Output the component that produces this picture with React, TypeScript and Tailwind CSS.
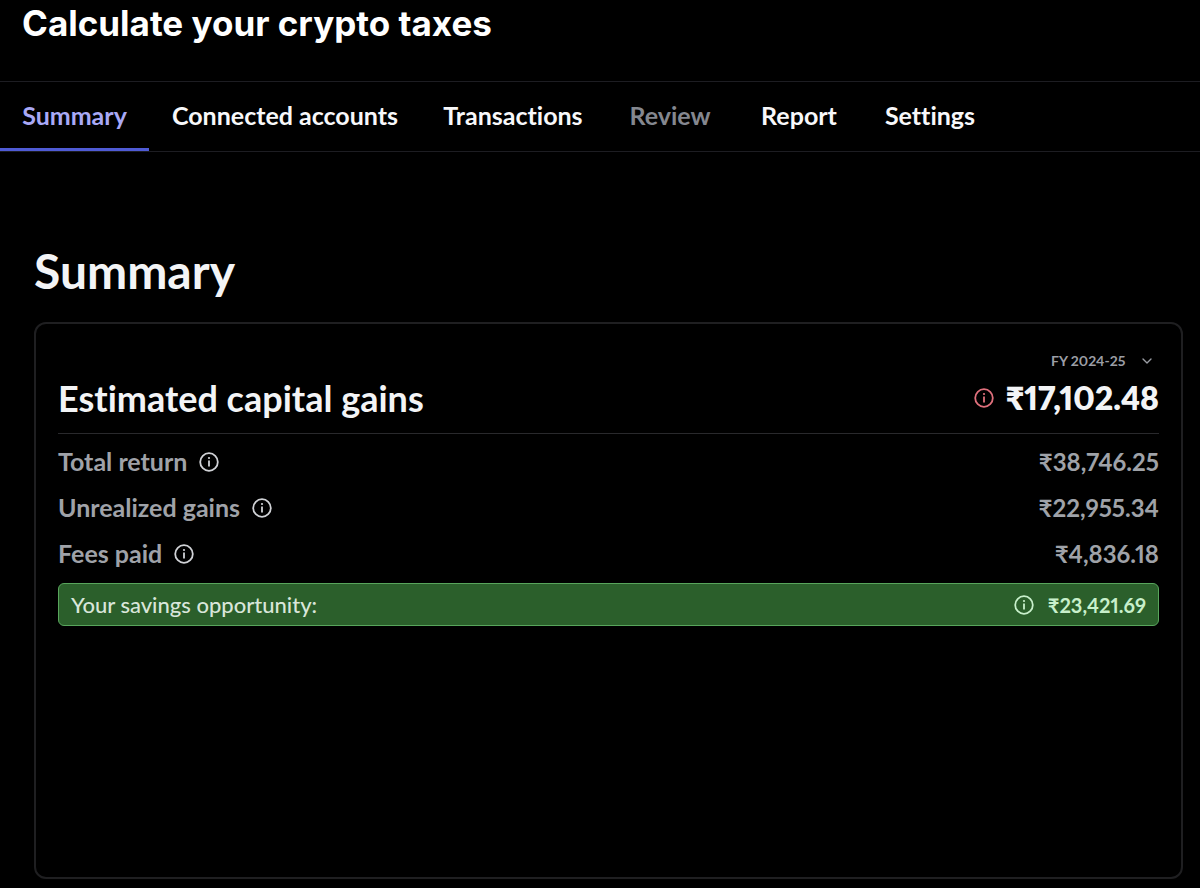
import { ChevronDown } from "lucide-react";

const TABS = [
  { label: "Summary", style: "min-w-[149px] text-[#a9a9f6]", active: true },
  { label: "Connected accounts", style: "min-w-[272px] text-[#f8f8fa]" },
  { label: "Transactions", style: "min-w-[184px] text-[#f8f8fa]" },
  { label: "Review", style: "min-w-[130px] text-[#84878f]", disabled: true },
  { label: "Report", style: "min-w-[128px] text-[#f8f8fa]" },
  { label: "Settings", style: "min-w-[134px] text-[#f8f8fa]" },
];

const ROWS = [
  { label: "Total return", value: "₹38,746.25" },
  { label: "Unrealized gains", value: "₹22,955.34" },
  { label: "Fees paid", value: "₹4,836.18" },
];

function InfoIcon() {
  return (
    <svg viewBox="0 0 20 20" className="size-5" fill="none" aria-hidden="true">
      <circle cx="10" cy="10" r="8.8" stroke="currentColor" strokeWidth="1.8" />
      <circle cx="10" cy="6" r="1.1" fill="currentColor" />
      <path d="M10 8.4v6.1" stroke="currentColor" strokeWidth="1.8" />
    </svg>
  );
}

function InfoButton({ label, className }: { label: string; className: string }) {
  return (
    <button type="button" aria-label={label} className={className}>
      <InfoIcon />
    </button>
  );
}

export default function App() {
  return (
    <div className="min-h-screen bg-black font-['Lato','Noto_Sans',sans-serif] font-bold text-[#f3f4f6] proportional-nums [font-variant-ligatures:none]">
      <header className="px-[22px] pt-[5px] pb-10">
        <h1 className="font-['Inter',sans-serif] text-[35px] leading-9 font-bold text-white">
          Calculate your crypto taxes
        </h1>
      </header>

      <nav className="flex border-y border-[#1d1d22]">
        {TABS.map((tab) => (
          <button
            key={tab.label}
            type="button"
            disabled={tab.disabled}
            aria-current={tab.active ? "page" : undefined}
            className={`h-[69px] border-b-[3px] pt-[2px] text-[25px] ${
              tab.active ? "border-[#4f5bd5]" : "border-transparent"
            } ${tab.style}`}
          >
            {tab.label}
          </button>
        ))}
      </nav>

      <main className="pt-[94px] pr-[17px] pb-2 pl-[34px]">
        <h2 className="text-5xl leading-[50px]">Summary</h2>

        <section className="mt-[26px] min-h-[557px] rounded-xl border-2 border-[#1f1f21] px-[22px] pt-[25px]">
          <div className="flex justify-end pr-1">
            <label className="grid grid-cols-[auto_16px] items-center gap-3 text-[#9b9ea5]">
              <select
                aria-label="Financial year"
                className="appearance-none bg-transparent text-sm leading-6 font-bold"
              >
                <option>FY 2024-25</option>
              </select>
              <ChevronDown className="size-4" aria-hidden="true" />
            </label>
          </div>

          <div className="flex items-center justify-between border-b border-[#29292c] pt-[2px] pb-3">
            <h3 className="text-4xl leading-[46px]">Estimated capital gains</h3>
            <div className="flex items-center gap-3">
              <InfoButton label="About estimated capital gains" className="text-[#e0707c]" />
              <span className="text-[32px] leading-[46px] font-extrabold">₹17,102.48</span>
            </div>
          </div>

          <dl className="pt-[5px]">
            {ROWS.map((row) => (
              <div
                key={row.label}
                className="flex h-[46px] items-center justify-between text-[#9fa2a8]"
              >
                <dt className="flex items-center gap-3 text-[25px]">
                  {row.label}
                  <InfoButton label={`About ${row.label}`} className="text-[#d0d2d6]" />
                </dt>
                <dd className="text-2xl">{row.value}</dd>
              </div>
            ))}
          </dl>

          <div className="mt-[6px] flex h-[43px] items-center justify-between rounded-md border border-[#58a55c] bg-[#2b5f2b] px-3 text-[#c8f0cb]">
            <span className="text-[22px] font-medium text-[#d9e6da]">Your savings opportunity:</span>
            <div className="flex items-center gap-[14px]">
              <InfoButton label="About your savings opportunity" className="text-[#c8f0cb]" />
              <span className="text-xl">₹23,421.69</span>
            </div>
          </div>
        </section>
      </main>
    </div>
  );
}
